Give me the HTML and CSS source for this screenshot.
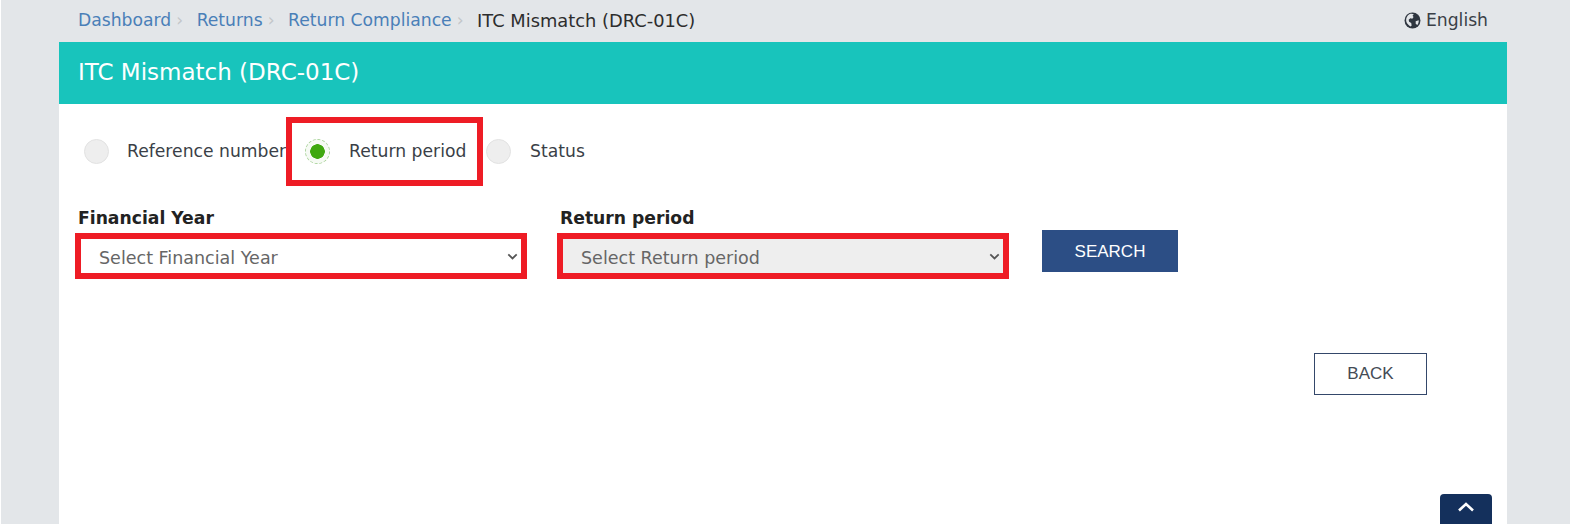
FILE: index.html
```html
<!DOCTYPE html>
<html lang="en">
  <head>
    <meta charset="UTF-8" />
    <title>ITC Mismatch (DRC-01C)</title>
    <link rel="stylesheet" href="styles.css">
  </head>
  <body>
    <div class="page">
      <div class="top-bar">
        <ul class="crumbs">
          <li><a href="#">Dashboard</a></li>
          <li><a href="#">Returns</a></li>
          <li><a href="#">Return Compliance</a></li>
          <li class="current">ITC Mismatch (DRC-01C)</li>
        </ul>
        <div class="lang">
          <svg class="globe" viewBox="0 0 16 16" width="17" height="17">
            <circle cx="8" cy="8" r="7.5" fill="#2f3640" />
            <path d="M5 2.2c1.6-.7 3.4-.6 4.2.2L8 3.6l1 1.2-1.2 1.6-1.8-.5-1.6 1.3.4 2 2 1.2.4 2.3-1 .9C4.6 12.6 2 10.6 2 7.6c0-2.2 1.2-4.4 3-5.4z" fill="#e3e6e9" />
            <path d="M11 8.6l2.8-.8c.2 1.6-.3 3.2-1.3 4.4l-1.5-1.2z" fill="#e3e6e9" />
          </svg>
          English
        </div>
      </div>

      <div class="card">
        <h1 class="card-title">ITC Mismatch (DRC-01C)</h1>

        <div class="radio-row">
          <label class="radio-item">
            <span class="radio"></span>
            <span class="radio-text">Reference number</span>
          </label>
          <label class="radio-item marked">
            <span class="radio checked"></span>
            <span class="radio-text">Return period</span>
          </label>
          <label class="radio-item">
            <span class="radio"></span>
            <span class="radio-text">Status</span>
          </label>
        </div>

        <div class="search-row">
          <div class="form-group">
            <label for="fin_year">Financial Year</label>
            <select id="fin_year" class="marked-select">
              <option>Select Financial Year</option>
            </select>
          </div>
          <div class="form-group">
            <label for="ret_period">Return period</label>
            <select id="ret_period" class="marked-select" disabled>
              <option>Select Return period</option>
            </select>
          </div>
          <button type="button" class="btn-search">SEARCH</button>
        </div>

        <div class="back-row">
          <button type="button" class="btn-back">BACK</button>
        </div>

        <a href="#" class="to-top">
          <svg viewBox="0 0 18 10" width="18" height="10">
            <path d="M2 8.5 9 2l7 6.5" fill="none" stroke="#fff" stroke-width="2.6" />
          </svg>
        </a>
      </div>
    </div>
  </body>
</html>
```

FILE: styles.css
```css
html,
body {
  margin: 0;
  height: 524px;
  overflow: hidden;
}
body {
  border-left: 1px solid #fff;
  font-family: "DejaVu Sans", Verdana, sans-serif;
  font-size: 17.2px;
  color: #3a3f47;
  background: #e3e6e9;
}
.page {
  margin: 0 63px 0 58px;
}
.top-bar {
  display: flex;
  justify-content: space-between;
  align-items: center;
  height: 42px;
  padding: 0 19px 2px 19px;
  box-sizing: border-box;
}
.crumbs {
  display: flex;
  list-style: none;
  margin: 0;
  padding: 0;
}
.crumbs li:not(.current)::after {
  content: "›";
  color: #c4c7ca;
  margin: 0 13.5px 0 5px;
}
.crumbs a {
  color: #4a7fb8;
  text-decoration: none;
}
.crumbs .current {
  font-size: 17.85px;
  color: #2d2d2d;
}
.lang {
  display: flex;
  align-items: center;
  gap: 5px;
}
.card {
  position: relative;
  height: 482px;
  background: #fff;
}
.card-title {
  margin: 0;
  height: 62px;
  line-height: 60px;
  padding-left: 19px;
  font-size: 23px;
  font-weight: normal;
  color: #fff;
  background: #18c4bc;
}
.radio-row {
  display: flex;
  align-items: center;
  padding: 13px 0 0 25px;
}
.radio-item {
  display: flex;
  align-items: center;
  gap: 19px;
}
.radio-text {
  margin-top: -2px;
}
.radio-item:first-child {
  gap: 18px;
}
.radio-item.marked {
  box-sizing: border-box;
  height: 69px;
  width: 197px;
  padding-left: 13px;
  border: 6px solid #ee1c25;
}
.radio-item:last-child {
  margin-left: 3px;
}
.radio {
  box-sizing: border-box;
  width: 25px;
  height: 25px;
  border: 1px solid #e2e2e2;
  border-radius: 50%;
  background: #eee;
}
.radio.checked {
  background: radial-gradient(circle, #3fa80f 0 7px, #f6faf4 7.5px);
  border: 1px dashed #a9d39a;
}
.search-row {
  display: flex;
  align-items: flex-start;
  padding: 22px 0 0 16px;
}
.form-group {
  margin-right: 30px;
}
.form-group + .form-group {
  margin-right: 33px;
}
.form-group label {
  display: block;
  margin-bottom: 5px;
  padding-left: 3px;
  font-weight: bold;
  color: #222;
}
.marked-select {
  display: block;
  box-sizing: border-box;
  width: 452px;
  height: 46px;
  padding: 3px 0 0 18px;
  border: 6px solid #ee1c25;
  border-radius: 0;
  appearance: none;
  font-family: inherit;
  font-size: 17.5px;
  color: #666;
  background: #fff url("data:image/svg+xml,%3Csvg xmlns='http://www.w3.org/2000/svg' viewBox='0 0 12 8'%3E%3Cpath d='M1.2 1.5 6 6.2l4.8-4.7' fill='none' stroke='%23555' stroke-width='2'/%3E%3C/svg%3E") no-repeat right 3px center / 11px 7px;
  opacity: 1;
}
.marked-select:disabled {
  background-color: #eee;
  color: #666;
}
.btn-search {
  width: 136px;
  height: 42px;
  margin-top: 22px;
  padding-top: 2px;
  border: 1px solid #2c4e85;
  font-family: "Liberation Sans", Arial, sans-serif;
  font-size: 17px;
  color: #fff;
  background: #2c4e85;
}
.back-row {
  display: flex;
  justify-content: flex-end;
  padding: 74px 80px 0 0;
}
.btn-back {
  box-sizing: border-box;
  width: 113px;
  height: 42px;
  border: 1px solid #34476a;
  font-family: "Liberation Sans", Arial, sans-serif;
  font-size: 17px;
  color: #444b55;
  background: #fff;
}
.to-top {
  position: absolute;
  right: 15px;
  bottom: -20px;
  display: flex;
  justify-content: center;
  width: 52px;
  height: 50px;
  padding-top: 8px;
  box-sizing: border-box;
  border-radius: 4px;
  background: #14305c;
}
```
